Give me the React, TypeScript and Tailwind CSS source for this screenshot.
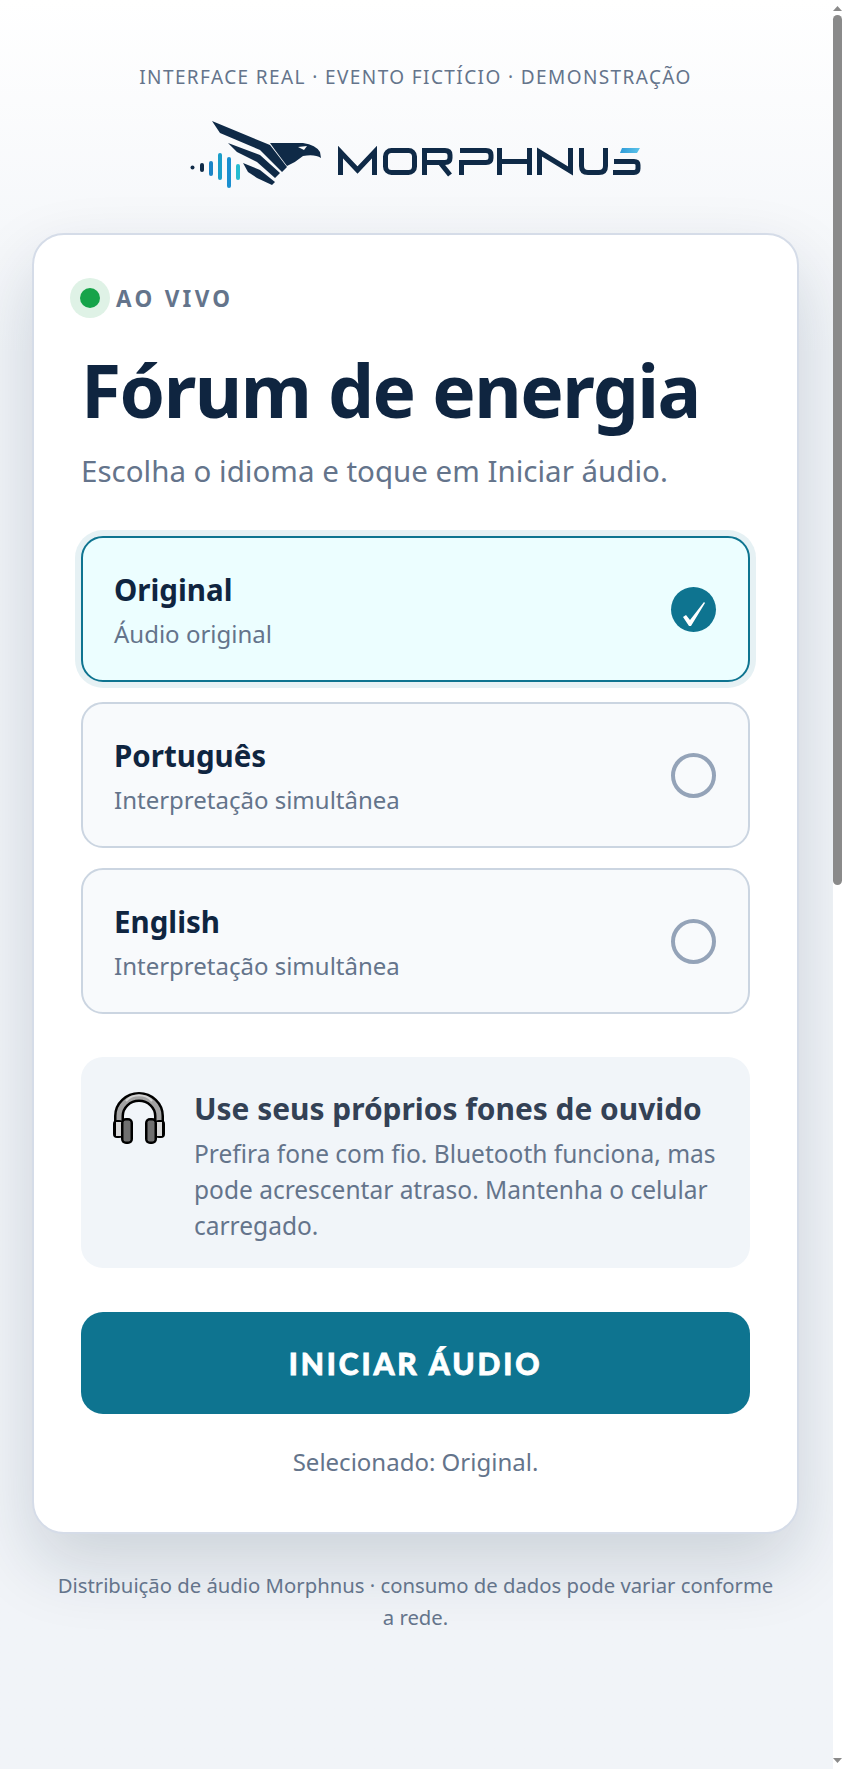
const options = [
  { title: "Original", sub: "Áudio original", selected: true },
  { title: "Português", sub: "Interpretação simultânea", selected: false },
  { title: "English", sub: "Interpretação simultânea", selected: false },
]

// coordinates follow the page position of the logo, hence the viewBox origin
const Logo = () => (
  <svg width="452" height="68" viewBox="190 120 452 68" fill="none">
    <defs>
      <linearGradient id="sTop" x1="0" x2="1" y1="0" y2="0">
        <stop offset="0" stopColor="#2f9bd8" />
        <stop offset="1" stopColor="#5cc4ea" />
      </linearGradient>
    </defs>
    <circle cx="192.5" cy="167.5" r="2" fill="#0f2a47" />
    <path d="M202 165v5" stroke="#0f2a47" strokeWidth="4" strokeLinecap="round" />
    <path d="M211 163v11" stroke="#1b84c6" strokeWidth="4" strokeLinecap="round" />
    <path d="M220 155v23" stroke="#1b9ec9" strokeWidth="4" strokeLinecap="round" />
    <path d="M229 159v27" stroke="#1a8fd0" strokeWidth="4" strokeLinecap="round" />
    <path d="M238 166v12" stroke="#25bcd0" strokeWidth="4" strokeLinecap="round" />
    <path d="M212 121 L270 145 L287 167 L282 172 L260 150 L220 133 Z" fill="#0f2a47" />
    <path d="M228 143 L260 155 L280 173 L275 178 L257 162 L237 152 Z" fill="#0f2a47" />
    <path d="M243 163 L260 170 L275 182 L272 185 L257 178 L248 172 Z" fill="#0f2a47" />
    <path d="M270 143 L303 143 Q316 145 320 152 L321 158 Q315 154 303 156 Q296 162 287 166 L275 150 Z" fill="#0f2a47" />
    <path d="M298 147 L307 146 L304 150 Z" fill="#ffffff" />
    <g stroke="#0f2a47" strokeWidth="5" fill="none">
      <path d="M340.5 175V152L357.5 170L374.5 152V175" />
      <rect x="385.5" y="150.5" width="29" height="22" rx="6" />
      <path d="M424.500 175V150.500H445Q450 150.500 450 155V158Q450 162.500 445 162.500H427M440 162.500L450 175" />
      <path d="M461.500 175V162.500H486Q491 162.500 491 158V155Q491 150.500 486 150.500H460" />
      <path d="M499.500 175V148M529.500 175V148M499.500 161.500H529.500" />
      <path d="M539.500 175V152L570.500 171V148" />
      <path d="M581.500 148V166Q581.500 172.500 588 172.500H599Q605.500 172.500 605.500 166V148" />
      <path d="M614 161.500H634Q638 161.500 638 165V168.500Q638 172.500 634 172.500H613" />
    </g>
    <path d="M622 148H640L637 153H620Z" fill="url(#sTop)" />
  </svg>
)

const Headphones = () => (
  <svg width="52" height="52" viewBox="0 0 52 52">
    <path d="M6 29V24a20 19 0 0 1 40 0v5" fill="none" stroke="#000" strokeWidth="10" />
    <path d="M6 29V24a20 19 0 0 1 40 0v5" fill="none" stroke="#a3a3a3" strokeWidth="5" />
    <path d="M13 9a16 14 0 0 1 26 0" fill="none" stroke="#d4d4d4" strokeWidth="2" />
    <rect x="0" y="28" width="10" height="18" rx="4" fill="#000" />
    <rect x="42" y="28" width="10" height="18" rx="4" fill="#000" />
    <rect x="3" y="30" width="6" height="14" fill="#d9d9d9" />
    <rect x="43" y="30" width="6" height="14" fill="#d9d9d9" />
    <rect x="8" y="26" width="12" height="26" rx="5" fill="#000" />
    <rect x="32" y="26" width="12" height="26" rx="5" fill="#000" />
    <rect x="10.500" y="28.500" width="7" height="21" rx="2" fill="#707070" />
    <rect x="34.500" y="28.500" width="7" height="21" rx="2" fill="#707070" />
  </svg>
)

export default function App() {
  return (
    <div className="flex h-[1769px] overflow-hidden font-['Noto_Sans','Open_Sans',sans-serif] text-[#0f2540]">
      <main className="min-w-0 flex-1 bg-gradient-to-b from-white via-[#f1f4f8] via-[20%] to-[#f1f4f8] pl-[32px] pr-[34px] pt-[64px]">
        <p className="text-center text-[19px] leading-[26px] tracking-[1.4px] text-[#64748b]">
          INTERFACE REAL · EVENTO FICTÍCIO · DEMONSTRAÇÃO
        </p>
        <div className="mt-[30px] flex justify-center pl-[1px]">
          <Logo />
        </div>
        <section className="mt-[45px] rounded-[32px] border-2 border-[#d5dce8] bg-white px-[47px] pb-[53px] pt-[43px] shadow-[0_30px_70px_rgba(15,37,64,0.16)]">
          <div className="flex items-center gap-[6px]">
            <span className="-ml-[11px] flex h-[40px] w-[40px] items-center justify-center rounded-full bg-[#dff2e6]">
              <span className="h-[20px] w-[20px] rounded-full bg-[#16a34a]" />
            </span>
            <span className="pt-[2px] text-[22.5px] font-bold tracking-[3.3px] text-[#64748b]">AO VIVO</span>
          </div>
          <h1 className="mt-[32px] text-[73px] font-bold leading-[80px] tracking-[-1.5px] text-[#0f2540]">Fórum de energia</h1>
          <p className="mt-[21px] text-[29.5px] leading-[40px] text-[#64748b]">Escolha o idioma e toque em Iniciar áudio.</p>
          <div className="mt-[45px] flex flex-col gap-[20px]">
            {options.map(o => (
              <div
                key={o.title}
                className={`flex h-[146px] items-center justify-between rounded-[22px] border-2 pl-[31px] pr-[32px] ${
                  o.selected
                    ? "border-[#0e7490] bg-[#ecfeff] shadow-[0_0_0_6px_rgba(14,116,144,0.1)]"
                    : "border-[#cbd5e1] bg-[#f8fafc]"
                }`}
              >
                <div className="pt-[2px]">
                  <div className="text-[29.5px] font-bold leading-[40px] text-[#0f2540]">{o.title}</div>
                  <div className="mt-[7px] text-[24px] leading-[34px] text-[#64748b]">{o.sub}</div>
                </div>
                {o.selected ? (
                  <span className="h-[45px] w-[45px] rounded-full bg-[#0e7490]">
                    <svg width="45" height="45" viewBox="0 0 45 45">
                      <path d="M12 30 L15 28 L19 33 L33 15 L34 16 L20 39 L18 39 Z" fill="#fff" />
                    </svg>
                  </span>
                ) : (
                  <span className="h-[45px] w-[45px] rounded-full border-[4px] border-[#94a3b8]" />
                )}
              </div>
            ))}
          </div>
          <div className="mt-[43px] flex gap-[29px] rounded-[22px] bg-[#f1f5f9] pb-[24px] pl-[32px] pr-[24px] pt-[32px]">
            <div className="shrink-0 pt-[3px]">
              <Headphones />
            </div>
            <div>
              <div className="text-[29.9px] font-bold leading-[40px] text-[#334155]">Use seus próprios fones de ouvido</div>
              <div className="mt-[7px] text-[24.5px] leading-[36px] text-[#64748b]">
                Prefira fone com fio. Bluetooth funciona, mas pode acrescentar atraso. Mantenha o celular carregado.
              </div>
            </div>
          </div>
          <button className="mt-[44px] h-[102px] w-full rounded-[22px] bg-[#0e7490] text-[30px] font-black tracking-[2.9px] text-white [-webkit-text-stroke:0.8px_white] [font-family:Lato,sans-serif]">
            INICIAR ÁUDIO
          </button>
          <p className="mt-[31px] text-center text-[24px] leading-[34px] text-[#64748b]">Selecionado: Original.</p>
        </section>
        <p className="mt-[35px] px-[22px] text-center text-[20.3px] leading-[32px] text-[#64748b]">
          Distribuição de áudio Morphnus · consumo de dados pode variar conforme a rede.
        </p>
      </main>
      {/* scrollbar as it appears in the capture */}
      <aside className="flex w-[12px] shrink-0 flex-col bg-white pb-[6px] pt-[6px]">
        <svg width="9" height="5" viewBox="0 0 9 5" className="shrink-0">
          <path d="M4.500 0L9 5H0Z" fill="#8a8a8a" />
        </svg>
        <div className="mt-[4px] h-[870px] w-[9px] rounded-[5px] bg-[#8a8a8a]" />
        <svg width="9" height="5" viewBox="0 0 9 5" className="mt-auto shrink-0">
          <path d="M0 0H9L4.500 5Z" fill="#8a8a8a" />
        </svg>
      </aside>
    </div>
  )
}
